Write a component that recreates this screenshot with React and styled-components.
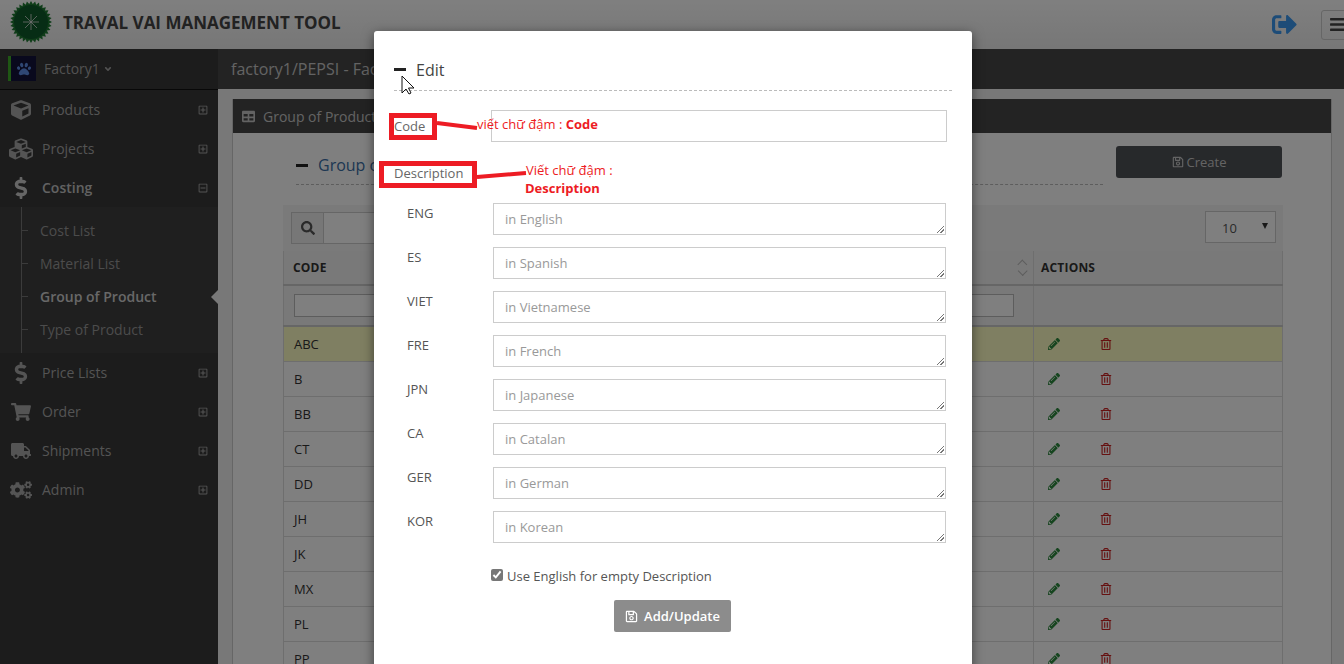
import React from 'react'
import styled, { createGlobalStyle } from 'styled-components'
import {
  FaCube,
  FaCubes,
  FaDollarSign,
  FaShoppingCart,
  FaTruck,
  FaCogs,
  FaTable,
  FaSearch,
  FaPencilAlt,
  FaRegTrashAlt,
  FaRegSave,
  FaRegPlusSquare,
  FaRegMinusSquare,
  FaSignOutAlt,
  FaPaw,
  FaBars,
  FaAngleDown,
} from 'react-icons/fa'

const GlobalStyle = createGlobalStyle`
  html, body {
    margin: 0;
    height: 664px;
    overflow: hidden;
    background: #f1f1f1;
    font-family: "Open Sans", "Liberation Sans", sans-serif;
    font-size: 13px;
    color: #333;
  }
  * { box-sizing: border-box; }
`

const Page = styled.div`
  position: relative;
  width: 1344px;
  height: 664px;
  overflow: hidden;
`

const Header = styled.header`
  height: 49px;
  display: flex;
  align-items: center;
  padding: 0 0 0 10px;
  background: linear-gradient(#ffffff, #eeeeee);
`

const AppTitle = styled.h1`
  margin: 0 0 5px 11px;
  font-size: 17px;
  font-weight: 700;
  color: #444;
  flex: 1;
`

const LogoutLink = styled.span`
  display: flex;
  color: #3a98f0;
  font-size: 25px;
  margin: 0 24px 0 0;
`

const MenuToggle = styled.button`
  width: 40px;
  height: 30px;
  margin: 0 -17px 0 0;
  display: flex;
  align-items: center;
  padding: 0 0 0 7px;
  background: transparent;
  border: 1px solid #ccc;
  border-radius: 3px;
  color: #444;
  font-size: 17px;
`

const Body = styled.div`
  display: flex;
  height: 615px;
`

const Sidebar = styled.aside`
  width: 218px;
  flex: none;
  background: #383838;
  color: #b0b0b0;
`

const FactoryBar = styled.div`
  height: 41px;
  display: flex;
  align-items: center;
  padding: 0 0 1px 8px;
  border-bottom: 1px solid #111;
  font-size: 14px;
  color: #a4a4a4;
  gap: 8px;
`

const FactoryCaret = styled(FaAngleDown)`
  margin-left: -5px;
  font-size: 10px;
`

const Avatar = styled.span`
  width: 28px;
  height: 25px;
  display: flex;
  align-items: center;
  justify-content: center;
  background: #12123a;
  border-left: 3px solid #3fae29;
  color: #5e8ee8;
  font-size: 14px;
`

const MenuItem = styled.div`
  height: 39px;
  display: flex;
  align-items: center;
  padding: 0 10px 0 8px;
  font-size: 14px;
  color: ${(p) => (p.$open ? '#c4c4c4' : '#a8a8a8')};
  font-weight: ${(p) => (p.$open ? 600 : 400)};
`

const MenuIcon = styled.span`
  width: 26px;
  display: flex;
  justify-content: center;
  margin-right: 8px;
  font-size: ${(p) => p.$size || 20}px;
  color: ${(p) => (p.$open ? '#cccccc' : '#a8a8a8')};
`

const MenuLabel = styled.span`
  flex: 1;
`

const Toggle = styled.span`
  display: flex;
  color: #a8a8a8;
  font-size: 10px;
`

const SubMenu = styled.div`
  position: relative;
  background: #3e3e3e;
  height: 146px;
  padding: 7px 0 0 19px;
  border-left: 21px solid #3e3e3e;
  box-shadow: inset 1px 0 0 #777;
`

const SubItem = styled.div`
  position: relative;
  height: 33px;
  display: flex;
  align-items: center;
  font-size: 14px;
  color: ${(p) => (p.$active ? '#d0d0d0' : '#989898')};
  font-weight: ${(p) => (p.$active ? 600 : 400)};

  &::before {
    content: '';
    position: absolute;
    left: -19px;
    top: 16px;
    width: 7px;
    height: 1px;
    background: #777;
  }

  ${(p) =>
    p.$active &&
    `&::after {
      content: '';
      position: absolute;
      right: 0;
      top: 10px;
      border: 7px solid transparent;
      border-left: 0;
      border-right-color: #f1f1f1;
    }`}
`

const Main = styled.main`
  flex: 1;
  min-width: 0;
`

const TitleBar = styled.div`
  height: 40px;
  display: flex;
  align-items: center;
  padding: 0 0 0 13px;
  background: #464646;
  color: #c6c6c6;
  font-size: 16px;
`

const Panel = styled.section`
  margin: 10px 12px 0 14px;
  height: 600px;
  background: #fff;
  border-right: 1px solid #ccc;
  border-left: 1px solid #ccc;
`

const PanelHead = styled.div`
  height: 34px;
  display: flex;
  align-items: center;
  gap: 8px;
  padding: 0 0 0 9px;
  background: #464646;
  color: #c6c6c6;
  font-size: 14px;
`

const PanelBody = styled.div`
  padding: 13px 48px 0 50px;
`

const TitleRow = styled.div`
  display: grid;
  grid-template-columns: 820px 1fr;
  column-gap: 13px;
  height: 59px;
`

const SectionTitle = styled.div`
  height: 39px;
  display: flex;
  align-items: center;
  gap: 10px;
  margin-left: 13px;
  border-bottom: 1px dashed #bbb;
  font-size: 16px;
  color: #3b6ea5;
`

const Dash = styled.span`
  width: 12px;
  height: 3px;
  background: #222;
`

const CreateButton = styled.div`
  width: 166px;
  height: 32px;
  display: flex;
  align-items: center;
  justify-content: center;
  gap: 3px;
  background: #4f5257;
  border-radius: 3px;
  color: #c9c9c9;
  font-size: 13px;
`

const Toolbar = styled.div`
  height: 46px;
  display: flex;
  align-items: flex-start;
  justify-content: space-between;
  padding: 6px 7px 0 8px;
  background: #f5f5f5;
`

const SearchBox = styled.div`
  display: flex;
  width: 300px;
  height: 32px;
  margin-top: 1px;
  border: 1px solid #ccc;
  background: #fff;
`

const SearchAddon = styled.span`
  width: 32px;
  display: flex;
  align-items: center;
  justify-content: center;
  background: #eee;
  border-right: 1px solid #ccc;
  color: #555;
  font-size: 14px;
`

const PageSize = styled.div`
  width: 71px;
  height: 32px;
  display: flex;
  align-items: center;
  justify-content: space-between;
  padding: 2px 7px 0 16px;
  border: 1px solid #ccc;
  background: #fff;
  color: #555;
`

const Caret = styled.span`
  border: 3px solid transparent;
  border-top: 6px solid #333;
  border-bottom: 0;
  margin-bottom: 4px;
`

const GridRow = styled.div`
  display: grid;
  grid-template-columns: 300px 450px 250px;
  height: ${(p) => p.$h || 35}px;
  background: ${(p) => p.$bg || '#fff'};
  border-bottom: ${(p) => p.$border || '1px solid #ddd'};
`

const Cell = styled.div`
  display: flex;
  align-items: center;
  padding: 0 10px;
  border-left: 1px solid #ddd;
  ${(p) => p.$last && 'border-right: 1px solid #ddd; padding-left: 7px;'}
  ${(p) => p.$head && 'font-weight: 700; font-size: 12px; color: #333; letter-spacing: 0.2px;'}
  ${(p) => p.$head && !p.$last && 'padding-left: 9px;'}
`

const SortMark = styled.span`
  margin-left: auto;
  margin-right: -4px;
  width: 8px;
  height: 13px;
  display: flex;
  flex-direction: column;
  justify-content: space-between;
  &::before, &::after {
    content: '';
    width: 6px;
    height: 6px;
    border-left: 1px solid #bbb;
    border-top: 1px solid #bbb;
    transform: rotate(45deg);
  }
  &::after { transform: rotate(225deg); }
`

const FilterInput = styled.div`
  width: 100%;
  height: 23px;
  border: 1px solid #bbb;
  background: #fff;
`

const FilterCell = styled(Cell)`
  padding-right: 19px;
`

const ActionIcon = styled.span`
  display: flex;
  width: ${(p) => p.$w}px;
  padding-left: ${(p) => p.$pad || 0}px;
  font-size: 12px;
  color: ${(p) => p.$color};
`

const Backdrop = styled.div`
  position: absolute;
  inset: 0;
  background: rgba(0, 0, 0, 0.5);
`

const Modal = styled.div`
  position: absolute;
  left: 374px;
  top: 31px;
  width: 598px;
  height: 700px;
  padding: 20px 20px 0;
  background: #fff;
  border-radius: 3px;
  box-shadow: 0 3px 12px rgba(0, 0, 0, 0.5);
  color: #555;
`

const ModalTitle = styled.div`
  height: 40px;
  display: flex;
  align-items: center;
  gap: 10px;
  padding-bottom: 2px;
  border-bottom: 1px dashed #bbb;
  font-size: 16px;
  color: #444;
`

const CodeRow = styled.div`
  display: grid;
  grid-template-columns: 97px 1fr;
  margin: 19px 5px 0 0;
  height: 32px;
  align-items: center;
`

const FieldLabel = styled.label`
  color: #666;
`

const CodeInput = styled.div`
  height: 32px;
  border: 1px solid #ccc;
`

const DescriptionLabel = styled(FieldLabel)`
  display: block;
  margin-top: 22px;
  height: 39px;
  line-height: 18px;
`

const LangRow = styled.div`
  position: relative;
  display: grid;
  grid-template-columns: 86px 1fr;
  height: 32px;
  margin: 0 6px 12px 13px;
`

const LangLabel = styled.span`
  padding-top: 1px;
  line-height: 18px;
  color: #555;
`

const LangArea = styled.div`
  position: relative;
  height: 32px;
  display: flex;
  align-items: center;
  padding: 0 11px;
  border: 1px solid #ccc;
  color: #999;

  &::after {
    content: '';
    position: absolute;
    right: 1px;
    bottom: 1px;
    width: 7px;
    height: 7px;
    background: linear-gradient(135deg, transparent 45%, #777 45%, #777 55%, transparent 55%, transparent 70%, #777 70%, #777 80%, transparent 80%);
  }
`

const CheckRow = styled.label`
  display: flex;
  align-items: center;
  gap: 4px;
  margin: 24px 0 0 97px;
  height: 18px;
  color: #555;
`

const Check = styled.input`
  width: 12px;
  height: 12px;
  margin: 0 0 3px;
  accent-color: #777;
`

const SubmitRow = styled.div`
  display: flex;
  margin: 15px 0 0 220px;
`

const SubmitButton = styled.div`
  width: 117px;
  height: 32px;
  display: flex;
  align-items: center;
  justify-content: center;
  gap: 6px;
  background: #8c8c8c;
  border-radius: 2px;
  color: #fff;
  font-weight: 600;
`

const Note = styled.span`
  position: absolute;
  left: ${(p) => p.$x}px;
  top: ${(p) => p.$y}px;
  color: #ed1c24;
  font-family: "Open Sans", "Liberation Sans", sans-serif;
  font-size: 13px;
  line-height: 18px;
  white-space: nowrap;
  b { font-weight: 700; }
`

const Marks = styled.svg`
  position: absolute;
  left: 0;
  top: 0;
  pointer-events: none;
`

const rows = ['ABC', 'B', 'BB', 'CT', 'DD', 'JH', 'JK', 'MX', 'PL', 'PP']
const langs = [
  ['ENG', 'in English'],
  ['ES', 'in Spanish'],
  ['VIET', 'in Vietnamese'],
  ['FRE', 'in French'],
  ['JPN', 'in Japanese'],
  ['CA', 'in Catalan'],
  ['GER', 'in German'],
  ['KOR', 'in Korean'],
]

const LogoSvg = styled.svg`
  flex: none;
  margin-bottom: 5px;
`

const Logo = () => {
  const teeth = []
  for (let i = 0; i < 32; i++) {
    const a = (i / 32) * Math.PI * 2
    const b = ((i + 0.5) / 32) * Math.PI * 2
    teeth.push(`${21 + 21 * Math.cos(a)},${21 + 21 * Math.sin(a)}`)
    teeth.push(`${21 + 18 * Math.cos(b)},${21 + 18 * Math.sin(b)}`)
  }
  return (
    <LogoSvg width="42" height="42" viewBox="0 0 42 42">
      <polygon points={teeth.join(' ')} fill="#1f7a33" />
      <circle cx="21" cy="21" r="17" fill="#0f5a2a" />
      <g stroke="#ddd" strokeWidth="0.8">
        <line x1="21" y1="13" x2="21" y2="29" />
        <line x1="13" y1="21" x2="29" y2="21" />
        <line x1="15" y1="15" x2="27" y2="27" />
        <line x1="27" y1="15" x2="15" y2="27" />
      </g>
    </LogoSvg>
  )
}

const App = () => (
  <Page>
    <GlobalStyle />
    <Header>
      <Logo />
      <AppTitle>TRAVAL VAI MANAGEMENT TOOL</AppTitle>
      <LogoutLink>
        <FaSignOutAlt />
      </LogoutLink>
      <MenuToggle>
        <FaBars />
      </MenuToggle>
    </Header>
    <Body>
      <Sidebar>
        <FactoryBar>
          <Avatar>
            <FaPaw />
          </Avatar>
          <span>Factory1</span>
          <FactoryCaret />
        </FactoryBar>
        <MenuItem>
          <MenuIcon>
            <FaCube />
          </MenuIcon>
          <MenuLabel>Products</MenuLabel>
          <Toggle>
            <FaRegPlusSquare />
          </Toggle>
        </MenuItem>
        <MenuItem>
          <MenuIcon $size={24}>
            <FaCubes />
          </MenuIcon>
          <MenuLabel>Projects</MenuLabel>
          <Toggle>
            <FaRegPlusSquare />
          </Toggle>
        </MenuItem>
        <MenuItem $open>
          <MenuIcon $open $size={22}>
            <FaDollarSign />
          </MenuIcon>
          <MenuLabel>Costing</MenuLabel>
          <Toggle>
            <FaRegMinusSquare />
          </Toggle>
        </MenuItem>
        <SubMenu>
          <SubItem>Cost List</SubItem>
          <SubItem>Material List</SubItem>
          <SubItem $active>Group of Product</SubItem>
          <SubItem>Type of Product</SubItem>
        </SubMenu>
        <MenuItem>
          <MenuIcon $size={22}>
            <FaDollarSign />
          </MenuIcon>
          <MenuLabel>Price Lists</MenuLabel>
          <Toggle>
            <FaRegPlusSquare />
          </Toggle>
        </MenuItem>
        <MenuItem>
          <MenuIcon>
            <FaShoppingCart />
          </MenuIcon>
          <MenuLabel>Order</MenuLabel>
          <Toggle>
            <FaRegPlusSquare />
          </Toggle>
        </MenuItem>
        <MenuItem>
          <MenuIcon>
            <FaTruck />
          </MenuIcon>
          <MenuLabel>Shipments</MenuLabel>
          <Toggle>
            <FaRegPlusSquare />
          </Toggle>
        </MenuItem>
        <MenuItem>
          <MenuIcon $size={22}>
            <FaCogs />
          </MenuIcon>
          <MenuLabel>Admin</MenuLabel>
          <Toggle>
            <FaRegPlusSquare />
          </Toggle>
        </MenuItem>
      </Sidebar>
      <Main>
        <TitleBar>factory1/PEPSI - Factory Costing</TitleBar>
        <Panel>
          <PanelHead>
            <FaTable size={13} />
            Group of Product
          </PanelHead>
          <PanelBody>
            <TitleRow>
              <SectionTitle>
                <Dash />
                Group of Product
              </SectionTitle>
              <CreateButton>
                <FaRegSave size={12} /> Create
              </CreateButton>
            </TitleRow>
            <Toolbar>
              <SearchBox>
                <SearchAddon>
                  <FaSearch />
                </SearchAddon>
              </SearchBox>
              <PageSize>
                10 <Caret />
              </PageSize>
            </Toolbar>
            <GridRow $h={35} $bg="#f3f3f3" $border="2px solid #ccc">
              <Cell $head>CODE</Cell>
              <Cell $head>
                <SortMark />
              </Cell>
              <Cell $head $last>
                ACTIONS
              </Cell>
            </GridRow>
            <GridRow $h={41} $bg="#f3f3f3" $border="2px solid #ccc">
              <Cell>
                <FilterInput />
              </Cell>
              <FilterCell>
                <FilterInput />
              </FilterCell>
              <Cell $last />
            </GridRow>
            {rows.map((code, i) => (
              <GridRow key={code} $bg={i === 0 ? '#ffffc4' : '#fff'}>
                <Cell>{code}</Cell>
                <Cell />
                <Cell $last>
                  <ActionIcon $color="#2d8a3e" $pad={7} $w={59}>
                    <FaPencilAlt />
                  </ActionIcon>
                  <ActionIcon $color="#c22" $w={20}>
                    <FaRegTrashAlt />
                  </ActionIcon>
                </Cell>
              </GridRow>
            ))}
          </PanelBody>
        </Panel>
      </Main>
    </Body>
    <Backdrop />
    <Modal>
      <ModalTitle>
        <Dash />
        Edit
      </ModalTitle>
      <CodeRow>
        <FieldLabel>Code</FieldLabel>
        <CodeInput />
      </CodeRow>
      <DescriptionLabel>Description</DescriptionLabel>
      {langs.map(([code, text]) => (
        <LangRow key={code}>
          <LangLabel>{code}</LangLabel>
          <LangArea>{text}</LangArea>
        </LangRow>
      ))}
      <CheckRow>
        <Check type="checkbox" defaultChecked readOnly />
        Use English for empty Description
      </CheckRow>
      <SubmitRow>
        <SubmitButton>
          <FaRegSave size={13} /> Add/Update
        </SubmitButton>
      </SubmitRow>
      <Marks width="598" height="200" viewBox="0 0 598 200">
        <rect x="17.5" y="84.5" width="43" height="22" fill="none" stroke="#ed1c24" strokeWidth="5" />
        <rect x="7.5" y="132.5" width="93" height="22" fill="none" stroke="#ed1c24" strokeWidth="5" />
        <path d="M63 92 L103 97" stroke="#ed1c24" strokeWidth="4" fill="none" />
        <path d="M103 146 L152 142" stroke="#ed1c24" strokeWidth="4" fill="none" />
        <path
          d="M28 45 L28 62 L32 58 L35 63 L37 62 L34.5 57 L40 57 Z"
          fill="#fff"
          stroke="#111"
          strokeWidth="1"
        />
      </Marks>
      <Note $x={103} $y={84}>
        viết chữ đậm : <b>Code</b>
      </Note>
      <Note $x={152} $y={130}>
        Viết chữ đậm :
      </Note>
      <Note $x={151} $y={148}>
        <b>Description</b>
      </Note>
    </Modal>
  </Page>
)

export default App
